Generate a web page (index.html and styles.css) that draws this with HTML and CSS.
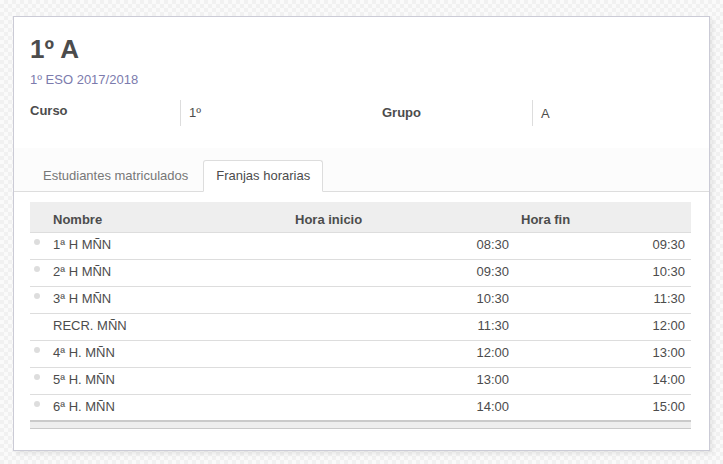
FILE: index.html
```html
<!DOCTYPE html>
<html lang="es">
<head>
<meta charset="utf-8">
<title>1º A</title>
<link rel="stylesheet" href="styles.css">
</head>
<body>
<div class="sheet">
  <h1 class="title">1º A</h1>
  <div class="subtitle">1º ESO 2017/2018</div>
  <div class="fields">
    <div class="label label-l">Curso</div>
    <div class="value">1º</div>
    <div class="label label-r">Grupo</div>
    <div class="value value-r">A</div>
  </div>
  <div class="notebook">
    <ul class="tabs">
      <li class="tab">Estudiantes matriculados</li>
      <li class="tab active">Franjas horarias</li>
    </ul>
  </div>
  <table class="list">
    <colgroup>
      <col class="c-handle">
      <col class="c-name">
      <col class="c-start">
      <col class="c-end">
    </colgroup>
    <thead>
      <tr>
        <th></th>
        <th>Nombre</th>
        <th>Hora inicio</th>
        <th>Hora fin</th>
      </tr>
    </thead>
    <tbody>
      <tr><td class="handle"><span class="dot"></span></td><td>1ª H MÑN</td><td class="num">08:30</td><td class="num">09:30</td></tr>
      <tr><td class="handle"><span class="dot"></span></td><td>2ª H MÑN</td><td class="num">09:30</td><td class="num">10:30</td></tr>
      <tr><td class="handle"><span class="dot"></span></td><td>3ª H MÑN</td><td class="num">10:30</td><td class="num">11:30</td></tr>
      <tr><td class="handle"></td><td>RECR. MÑN</td><td class="num">11:30</td><td class="num">12:00</td></tr>
      <tr><td class="handle"><span class="dot"></span></td><td>4ª H. MÑN</td><td class="num">12:00</td><td class="num">13:00</td></tr>
      <tr><td class="handle"><span class="dot"></span></td><td>5ª H. MÑN</td><td class="num">13:00</td><td class="num">14:00</td></tr>
      <tr class="last"><td class="handle"><span class="dot"></span></td><td>6ª H. MÑN</td><td class="num">14:00</td><td class="num">15:00</td></tr>
    </tbody>
    <tfoot>
      <tr><td colspan="4" class="foot"></td></tr>
    </tfoot>
  </table>
</div>
</body>
</html>
```
FILE: styles.css
```css
html, body {
  margin: 0;
  padding: 0;
}
body {
  font-family: "Liberation Sans", Arial, sans-serif;
  font-size: 13px;
  line-height: 18px;
  color: #4c4c4c;
  background: conic-gradient(#f1f1f1 25%, #fafafa 0 50%, #f1f1f1 0 75%, #fafafa 0) 0 0 / 8px 8px;
  height: 464px;
  overflow: hidden;
}
.sheet {
  box-sizing: border-box;
  width: 697px;
  margin: 16px 0 0 13px;
  padding: 17px 18px 21px 16px;
  background: #fff;
  border: 1px solid #cbcbd6;
  box-shadow: 3px 3px 4px rgba(0, 0, 0, 0.07);
}
.title {
  margin: 0;
  font-size: 26px;
  line-height: 30px;
  font-weight: bold;
  color: #4c4c4c;
}
.subtitle {
  margin-top: 7px;
  color: #7c7bad;
  font-size: 13px;
}
.fields {
  display: grid;
  grid-template-columns: 150px 202px 150px 159px;
  margin-top: 11px;
  height: 26px;
}
.label {
  font-weight: bold;
  padding-top: 2px;
}
.label-r {
  padding-top: 4px;
}
.value {
  border-left: 1px solid #ddd;
  padding-left: 8px;
  padding-top: 4px;
}
.value-r {
  padding-top: 5px;
}
.notebook {
  margin: 22px -18px 0 -16px;
  padding-top: 12px;
  background: #fcfcfc;
}
.tabs {
  list-style: none;
  margin: 0;
  padding: 0 0 0 16px;
  display: flex;
  border-bottom: 1px solid #ddd;
}
.tab {
  margin: 0 2px -1px 0;
  padding: 6px 12px;
  border: 1px solid transparent;
  border-radius: 3px 3px 0 0;
  color: #777;
}
.tab.active {
  background: #fff;
  border-color: #ddd;
  border-bottom-color: #fff;
  color: #4c4c4c;
}
.list {
  width: 661px;
  margin-top: 10px;
  border-collapse: collapse;
  table-layout: fixed;
}
.c-handle { width: 17px; }
.c-name { width: 242px; }
.c-start { width: 226px; }
.c-end { width: 176px; }
.list th {
  background: #eee;
  text-align: left;
  font-weight: bold;
  padding: 9px 6px 3px;
  border-bottom: 1px solid #ddd;
}
.list td {
  padding: 3px 6px 5px;
  border-bottom: 1px solid #ddd;
  white-space: nowrap;
}
.list tr.last td {
  border-bottom: none;
  padding-bottom: 4px;
}
.list tr.last td.handle {
  padding: 0;
}
.list td.handle {
  padding: 0;
  vertical-align: top;
}
.dot {
  display: block;
  width: 6px;
  height: 6px;
  margin: 6px 0 0 4px;
  border-radius: 50%;
  background: #ddd;
}
.list td.num {
  text-align: right;
}
.list td.foot {
  padding: 0;
  height: 6px;
  background: #eee;
  border-top: 2px solid #cacaca;
  border-bottom: 1px solid #cacaca;
}
```
